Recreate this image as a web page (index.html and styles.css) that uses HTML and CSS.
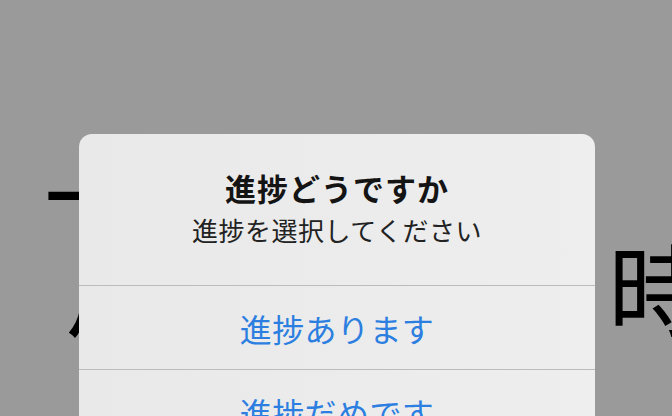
FILE: index.html
```html
<!DOCTYPE html>
<html lang="ja">
<head>
<meta charset="utf-8">
<link rel="stylesheet" href="styles.css">
</head>
<body>
<main class="screen">
  <div class="backdrop-text">
    <div class="line line-one">一</div>
    <div class="line line-two"><span>川</span><span>時</span></div>
  </div>
  <section class="alert">
    <header class="alert-head">
      <h1 class="alert-title">進捗どうですか</h1>
      <p class="alert-message">進捗を選択してください</p>
    </header>
    <button class="alert-action">進捗あります</button>
    <button class="alert-action">進捗だめです</button>
  </section>
</main>
</body>
</html>
```

FILE: styles.css
```css
html, body {
  margin: 0;
  padding: 0;
}
body {
  width: 672px;
  height: 416px;
  overflow: hidden;
  background: #9a9a9a;
  font-family: "Noto Sans CJK JP", "Noto Sans", sans-serif;
}
.screen {
  position: relative;
  width: 672px;
  height: 416px;
  overflow: hidden;
}
.backdrop-text {
  padding-top: 145px;
  padding-left: 44px;
  font-size: 100px;
  line-height: 94px;
  color: #000;
  font-weight: 400;
  white-space: nowrap;
}
.line-two {
  display: flex;
  justify-content: space-between;
  width: 642px;
  margin-left: 22px;
  box-sizing: border-box;
}
.alert {
  position: absolute;
  left: 79px;
  top: 134px;
  width: 516px;
  height: 400px;
  border-radius: 13px;
  background: linear-gradient(90deg, #e9e9e9, #eeeeee);
  display: flex;
  flex-direction: column;
}
.alert-head {
  height: 152px;
  box-sizing: border-box;
  padding-top: 33px;
  display: flex;
  flex-direction: column;
  align-items: center;
  border-bottom: 1px solid #bcbcbc;
}
.alert-title {
  margin: 0;
  font-size: 31px;
  line-height: 42px;
  font-weight: 700;
  letter-spacing: 1px;
  color: #141414;
}
.alert-message {
  margin: 3px 0 0;
  font-size: 26px;
  line-height: 36px;
  letter-spacing: 0.5px;
  color: #222;
}
.alert-action {
  height: 84px;
  flex: none;
  border: 0;
  border-bottom: 1px solid #bcbcbc;
  background: transparent;
  font-family: inherit;
  font-size: 32px;
  letter-spacing: 0.4px;
  color: #2c7fe0;
  padding: 0;
}
```
